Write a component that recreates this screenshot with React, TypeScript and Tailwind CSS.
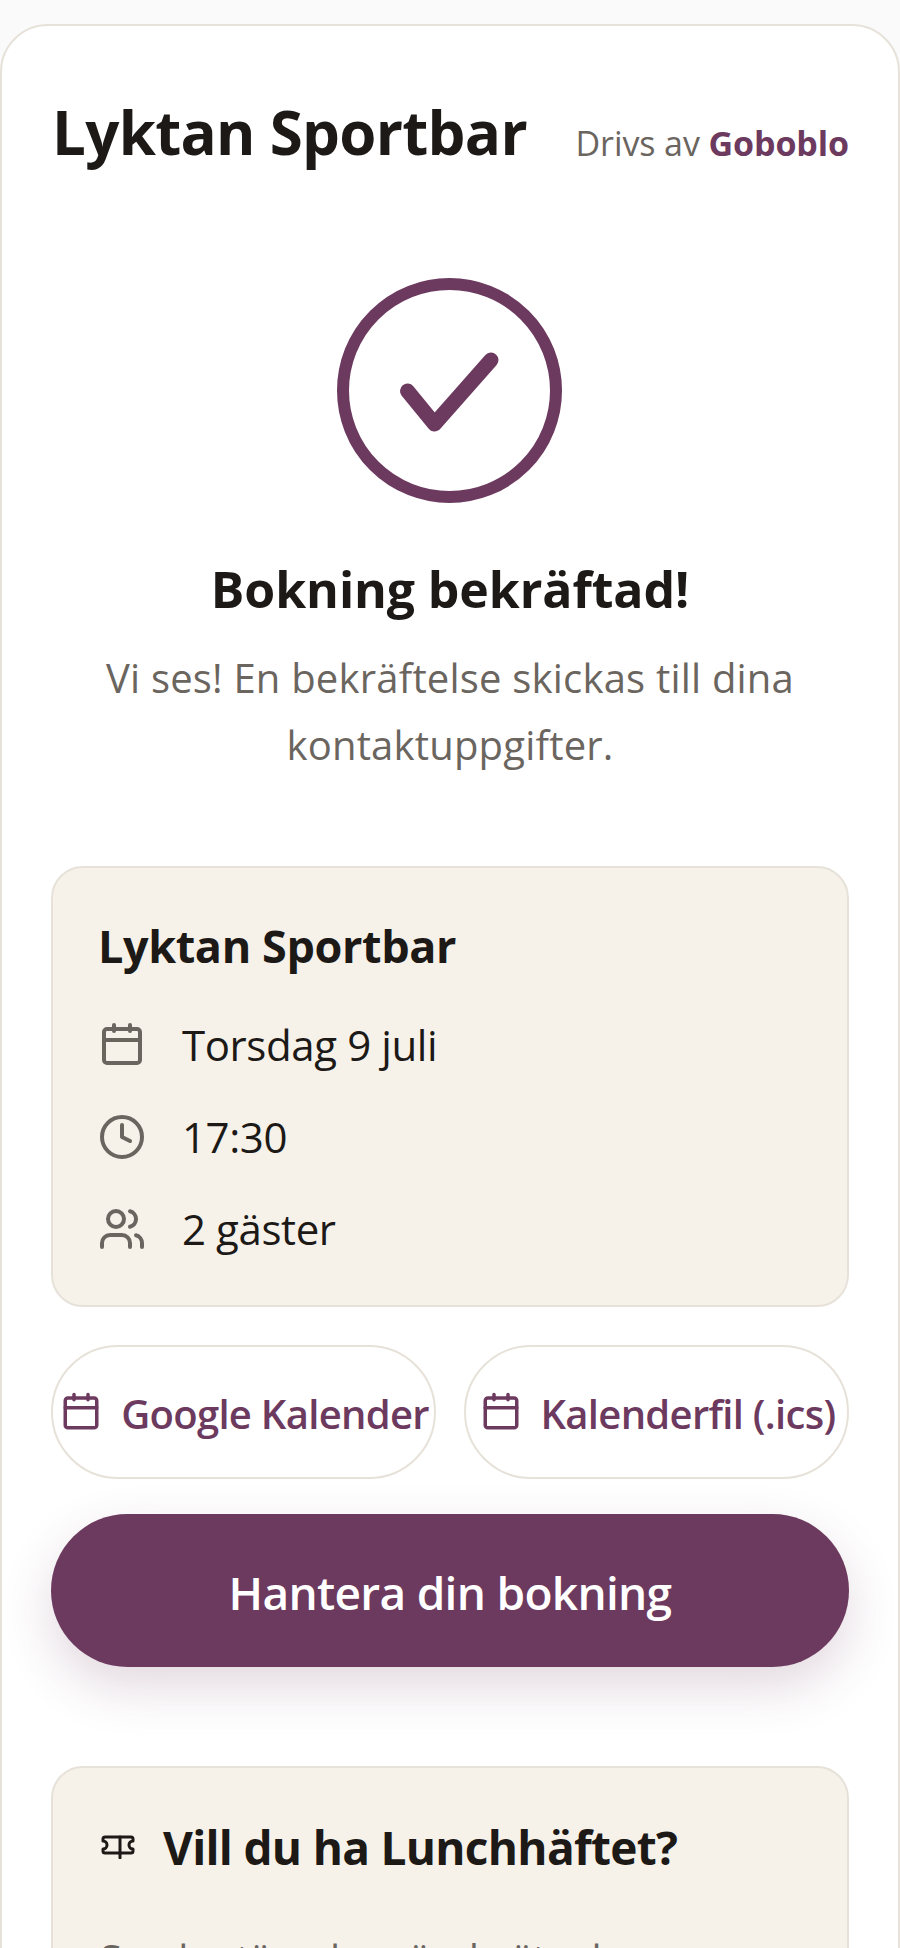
import React from "react";

const font = { fontFamily: '"Open Sans", "Noto Sans", sans-serif' };

function Cal({ className }: { className: string }) {
  return (
    <svg viewBox="0 0 24 24" fill="none" stroke="currentColor" strokeWidth="2" strokeLinecap="round" strokeLinejoin="round" className={className}>
      <path d="M8 2v3M16 2v3" />
      <rect x="3" y="4" width="18" height="17" rx="1.5" />
      <path d="M3 9.5h18" />
    </svg>
  );
}

function Clock({ className }: { className: string }) {
  return (
    <svg viewBox="0 0 24 24" fill="none" stroke="currentColor" strokeWidth="2" strokeLinecap="round" strokeLinejoin="round" className={className}>
      <circle cx="12" cy="12" r="10" />
      <path d="M12 6v6l4 2" />
    </svg>
  );
}

function Users({ className }: { className: string }) {
  return (
    <svg viewBox="0 0 24 24" fill="none" stroke="currentColor" strokeWidth="2" strokeLinecap="round" strokeLinejoin="round" className={className}>
      <path d="M16 21v-2a4 4 0 0 0-4-4H6a4 4 0 0 0-4 4v2" />
      <circle cx="9" cy="7" r="4" />
      <path d="M22 21v-2a4 4 0 0 0-3-3.87" />
      <path d="M16 3.13a4 4 0 0 1 0 7.75" />
    </svg>
  );
}

function Row({ icon, text }: { icon: React.ReactNode; text: string }) {
  return (
    <div className="flex h-[48px] items-center gap-[36px]">
      {icon}
      <span className="text-[42px] leading-none tracking-[-0.4px] text-[#1c1917]">{text}</span>
    </div>
  );
}

function Pill({ text }: { text: string }) {
  return (
    <div className="flex h-[134px] min-w-0 items-center justify-center gap-[19px] whitespace-nowrap rounded-full border-2 border-[#e7e2d9] bg-white pl-[2px] text-[#6d3a5f]">
      <Cal className="h-[42px] w-[42px] shrink-0" />
      <span className="pt-[3px] text-[40px] font-semibold leading-none tracking-[-0.7px]">{text}</span>
    </div>
  );
}

export default function App() {
  return (
    <div className="h-[1948px] overflow-hidden bg-[#fafafa] pt-[24px]" style={font}>
      <div className="h-[1960px] rounded-t-[48px] border-2 border-[#e7e2d9] bg-white px-[49px] pt-[66px]">
        <div className="flex items-center justify-between">
          <div className="pl-[1px] text-[60px] font-bold leading-[80px] tracking-[-0.7px] text-[#1c1917]">Lyktan Sportbar</div>
          <div className="mt-[22px] text-[34px] leading-[40px] tracking-[-0.1px] text-[#6b6560]">
            Drivs av <b className="text-[#6d3a5f]">Goboblo</b>
          </div>
        </div>

        <div className="mt-[106px] flex justify-center pr-[2px]">
          <svg viewBox="0 0 225 225" fill="none" stroke="#6d3a5f" strokeLinecap="round" strokeLinejoin="round" className="h-[225px] w-[225px]">
            <circle cx="112.5" cy="112.5" r="106.5" strokeWidth="12" />
            <path d="M70.5 113 L97.5 146 L154 82" strokeWidth="15" />
          </svg>
        </div>

        <h1 className="mt-[54px] text-center text-[50px] font-bold leading-[64px] tracking-[-0.1px] text-[#1c1917]">Bokning bekräftad!</h1>
        <p className="mt-[23px] text-center text-[40px] leading-[67px] tracking-[0.2px] text-[#6b6560]">
          Vi ses! En bekräftelse skickas till dina
          <br />
          kontaktuppgifter.
        </p>

        <div className="mt-[88px] flex h-[441px] flex-col rounded-[32px] border-2 border-[#e7e2d9] bg-[#f6f2ea] px-[45px] pt-[53px]">
          <h2 className="text-[45px] font-bold leading-[50px] tracking-[-0.4px] text-[#1c1917]">Lyktan Sportbar</h2>
          <div className="mt-[50px] flex flex-col gap-[44px]">
            <Row icon={<Cal className="h-[48px] w-[48px] text-[#6b6560]" />} text="Torsdag 9 juli" />
            <Row icon={<Clock className="h-[48px] w-[48px] text-[#6b6560]" />} text="17:30" />
            <Row icon={<Users className="h-[48px] w-[48px] text-[#6b6560]" />} text="2 gäster" />
          </div>
        </div>

        <div className="mt-[38px] grid grid-cols-2 gap-[28px]">
          <Pill text="Google Kalender" />
          <Pill text="Kalenderfil (.ics)" />
        </div>

        <div className="mt-[35px] flex h-[153px] items-center justify-center rounded-full bg-[#6d3a5f] pt-[4px] text-[46px] font-semibold tracking-[-0.7px] text-white shadow-[0_20px_50px_rgba(109,58,95,0.2)]">
          Hantera din bokning
        </div>

        <div className="mt-[99px] rounded-[32px] border-2 border-[#e7e2d9] bg-[#f6f2ea] px-[47px] pt-[46px]">
          <div className="flex h-[66px] items-center gap-[27px]">
            <svg viewBox="0 0 36 24" fill="none" stroke="#1c1917" strokeWidth="3" strokeLinecap="round" strokeLinejoin="round" className="h-[24px] w-[36px]">
              <path d="M5 2H31Q33 2 33 4V6A4 4 0 0 0 33 14V16Q33 18 31 18H5Q3 18 3 16V14A4 4 0 0 0 3 6V4Q3 2 5 2Z" />
              <path d="M20 2V23" />
            </svg>
            <h2 className="text-[46px] font-bold leading-[66px] tracking-[-0.7px] text-[#1c1917]">Vill du ha Lunchhäftet?</h2>
          </div>
          <p className="mt-[51px] whitespace-nowrap text-[40px] leading-[56px] tracking-[-1px] text-[#6b6560]">Samla stämplar när du äter hos oss</p>
        </div>
      </div>
    </div>
  );
}
